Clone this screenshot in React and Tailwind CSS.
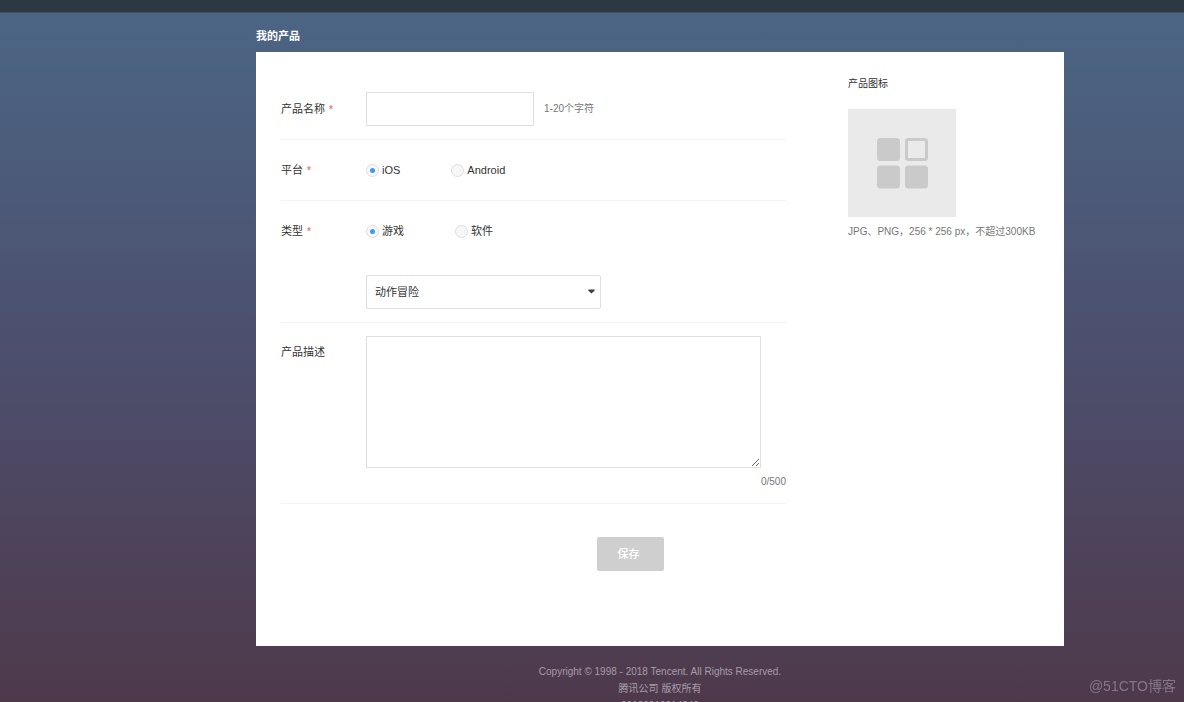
import { useState } from "react";

const platforms = [
  { value: "ios", label: "iOS" },
  { value: "android", label: "Android" },
];

const kinds = [
  { value: "game", label: "游戏" },
  { value: "software", label: "软件" },
];

const genres = ["动作冒险", "角色扮演", "休闲益智", "体育竞速"];

const MAX_DESC = 500;

function Star() {
  return (
    <span className="ml-1 text-[10px] font-bold text-[#e98587]">*</span>
  );
}

function RadioGroup({ name, options, value, onChange }) {
  return (
    <div className="flex gap-[51px]">
      {options.map((item) => (
        <label
          key={item.value}
          className="flex cursor-pointer items-center gap-[3px]"
        >
          <input
            type="radio"
            name={name}
            value={item.value}
            checked={value === item.value}
            onChange={() => onChange(item.value)}
            className="grid size-[13px] appearance-none place-items-center rounded-full border border-[#dedede] bg-[#f7f7f7] before:size-[5px] before:rounded-full checked:before:bg-[#3a9cf3]"
          />
          {item.label}
        </label>
      ))}
    </div>
  );
}

// 产品图标占位图
function IconPlaceholder() {
  return (
    <svg width="52" height="52" viewBox="0 0 52 52" aria-hidden="true">
      <rect x="1" y="1" width="23" height="23" rx="3.5" fill="#cacaca" />
      <rect
        x="30.5"
        y="2.5"
        width="20"
        height="20"
        rx="2"
        fill="none"
        stroke="#cacaca"
        strokeWidth="3"
      />
      <rect x="1" y="28.5" width="23" height="23" rx="3.5" fill="#cacaca" />
      <rect x="29" y="28.5" width="23" height="23" rx="3.5" fill="#cacaca" />
    </svg>
  );
}

export default function App() {
  const [name, setName] = useState("");
  const [platform, setPlatform] = useState("ios");
  const [kind, setKind] = useState("game");
  const [genre, setGenre] = useState(genres[0]);
  const [desc, setDesc] = useState("");

  return (
    <div className="flex h-screen flex-col overflow-hidden bg-linear-to-b from-[#4b6685] via-[#4c4f6e] to-[#4e394b] font-['Liberation_Sans','Noto_Sans_CJK_SC',sans-serif] text-[11px] leading-4 text-[#333]">
      <header className="h-[13px] shrink-0 border-b border-[#3f5163] bg-[#2e3842]" />

      <main className="pr-[120px] pl-64">
        <h1 className="pt-[15px] pb-2 font-bold text-white">我的产品</h1>

        <form
          className="flex gap-[62px] bg-white px-[25px] pt-6 pb-[75px]"
          onSubmit={(e) => e.preventDefault()}
        >
          <div className="flex-1 pt-0.5">
            <div className="flex items-center border-b border-[#f3f3f3] pt-[14px] pb-[13px]">
              <label htmlFor="name" className="w-[85px]">
                产品名称
                <Star />
              </label>
              <input
                id="name"
                type="text"
                maxLength={20}
                value={name}
                onChange={(e) => setName(e.target.value)}
                className="h-[34px] w-[168px] border border-[#e0e0e0] px-2 outline-none"
              />
              <span className="ml-2.5 text-[10px] text-[#777]">
                1-20个字符
              </span>
            </div>

            <div className="flex h-[61px] items-center border-b border-[#f3f3f3]">
              <span className="w-[85px]">
                平台
                <Star />
              </span>
              <RadioGroup
                name="platform"
                options={platforms}
                value={platform}
                onChange={setPlatform}
              />
            </div>

            <div className="border-b border-[#f3f3f3] pb-[13px]">
              <div className="flex h-[60px] items-center">
                <span className="w-[85px]">
                  类型
                  <Star />
                </span>
                <RadioGroup
                  name="kind"
                  options={kinds}
                  value={kind}
                  onChange={setKind}
                />
              </div>
              <div className="relative mt-[14px] ml-[85px] w-[235px]">
                <select
                  aria-label="类型"
                  value={genre}
                  onChange={(e) => setGenre(e.target.value)}
                  className="block h-[34px] w-full appearance-none rounded-[2px] border border-[#e0e0e0] bg-white px-2 outline-none"
                >
                  {genres.map((item) => (
                    <option key={item}>{item}</option>
                  ))}
                </select>
                <svg
                  className="pointer-events-none absolute top-[14px] right-[6px]"
                  width="7"
                  height="5"
                  viewBox="0 0 7 5"
                  aria-hidden="true"
                >
                  <path d="M0.3 0.5h6.4v1L3.5 4.6.3 1.5z" fill="#3c3c48" />
                </svg>
              </div>
            </div>

            <div className="flex border-b border-[#f3f3f3] py-[13px]">
              <label htmlFor="desc" className="mt-2 w-[85px]">
                产品描述
              </label>
              <div className="flex-1">
                <textarea
                  id="desc"
                  maxLength={MAX_DESC}
                  value={desc}
                  onChange={(e) => setDesc(e.target.value)}
                  className="block h-[132px] w-[395px] border border-[#e0e0e0] p-2 outline-none"
                />
                <p className="mt-[6px] text-right text-[10px] text-[#777]">
                  {desc.length}/{MAX_DESC}
                </p>
              </div>
            </div>

            <button
              type="submit"
              className="mt-[33px] ml-[316px] h-[34px] w-[67px] rounded-[2px] bg-[#cfcfcf] pr-1 font-medium text-white"
            >
              保存
            </button>
          </div>

          <aside className="w-[191px] text-[10px]">
            <h2>产品图标</h2>
            <label className="mt-[17px] flex size-[108px] cursor-pointer items-center justify-center bg-[#eaeaea]">
              <IconPlaceholder />
              <input
                type="file"
                accept="image/jpeg,image/png"
                aria-label="产品图标"
                className="sr-only"
              />
            </label>
            <p className="mt-[7px] whitespace-nowrap text-[#777]">
              JPG、PNG，256 * 256 px，不超过300KB
            </p>
          </aside>
        </form>

        <footer className="mt-[17px] text-center text-[10px] leading-[17px] text-[#a79da7]">
          <p>Copyright © 1998 - 2018 Tencent. All Rights Reserved.</p>
          <p>腾讯公司 版权所有</p>
          <p>20180910214240</p>
        </footer>
      </main>

      <span className="fixed right-2 bottom-2 text-[14px] text-[#84778a]">
        @51CTO博客
      </span>
    </div>
  );
}
